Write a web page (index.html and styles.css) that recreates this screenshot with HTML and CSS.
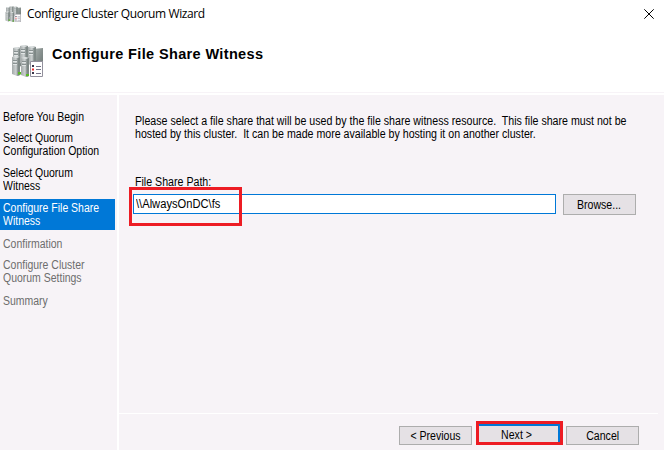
FILE: index.html
```
<!DOCTYPE html>
<html lang="en">
<head>
<meta charset="utf-8">
<title>Configure Cluster Quorum Wizard</title>
<link rel="stylesheet" href="styles.css">
</head>
<body>
<svg width="0" height="0" class="defs">
  <defs>
    <linearGradient id="metal" x1="0" x2="1"><stop offset="0" stop-color="#a3a9a9"/><stop offset=".45" stop-color="#c9cece"/><stop offset="1" stop-color="#858c8c"/></linearGradient>
    <linearGradient id="back" x1="0" x2="1" y2="1"><stop offset="0" stop-color="#b1b9b7"/><stop offset="1" stop-color="#5e6866"/></linearGradient>
    <g id="server">
      <path d="M0 1 5 0 8 1V19L5 20 0 18Z" fill="url(#metal)"/>
      <path d="M0 1 4 0 8 1 5 2Z" fill="#dce0e0"/>
      <path d="M5.5 2 8 1V19L5.5 20Z" fill="#7e8886"/>
      <path d="M1 4.5H5M1 7.5H5" stroke="#7b8585" stroke-width=".8"/>
      <path d="M1 5.5H5M1 8.5H5" stroke="#e8ecec" stroke-width=".8"/>
    </g>
    <symbol id="cluster" viewBox="0 0 32 32">
      <path d="M22 4 32 3V31H20Z" fill="url(#back)"/>
      <use href="#server" x="2" y="2"/><use href="#server" x="9" y="0"/><use href="#server" x="17" y="1"/>
      <use href="#server" x="1" y="11"/><use href="#server" x="10" y="12"/>
      <path d="M7 27h3v2.5H7zM15 29h3v2h-3z" fill="#59ba25"/>
      <path d="M19.5 16.5h12v15h-12z" fill="#fff" stroke="#92909c"/>
      <path d="M21 20h2v2h-2zM21 27h2v2h-2z" fill="#393549"/>
      <path d="M21 23.5h2v2h-2z" fill="#ee2b2b"/>
      <path d="M25 21.5h5M25 24.5h5M25 28.5h5" stroke="#77758a"/>
    </symbol>
  </defs>
</svg>
<div class="window">
  <header class="top">
    <div class="titlebar">
      <svg class="icon-small"><use href="#cluster"/></svg>
      <span class="title">Configure Cluster Quorum Wizard</span>
      <svg class="close" viewBox="0 0 10 10"><path d="M.3.3 9.7 9.7M9.7.3.3 9.7"/></svg>
    </div>
    <div class="banner">
      <svg class="icon-large"><use href="#cluster"/></svg>
      <h1>Configure File Share Witness</h1>
    </div>
  </header>
  <div class="body">
    <nav class="steps">
      <div class="step"><span>Before You Begin</span></div>
      <div class="step"><span>Select Quorum<br>Configuration Option</span></div>
      <div class="step"><span>Select Quorum<br>Witness</span></div>
      <div class="step current"><span>Configure File Share<br>Witness</span></div>
      <div class="step todo"><span>Confirmation</span></div>
      <div class="step todo"><span>Configure Cluster<br>Quorum Settings</span></div>
      <div class="step todo"><span>Summary</span></div>
    </nav>
    <main class="main">
      <section class="content">
        <p class="intro"><span>Please select a file share that will be used by the file share witness resource.&nbsp; This file share must not be<br>hosted by this cluster.&nbsp; It can be made more available by hosting it on another cluster.</span></p>
        <div class="label"><span>File Share Path:</span></div>
        <div class="field">
          <div class="input"><span>\\AlwaysOnDC\fs</span></div>
          <div class="button browse"><span>Browse...</span></div>
          <div class="mark mark-path"></div>
        </div>
      </section>
      <footer class="footer">
        <div class="button"><span>&lt; Previous</span></div>
        <div class="button next"><span>Next &gt;</span></div>
        <div class="button cancel"><span>Cancel</span></div>
      </footer>
    </main>
  </div>
</div>
</body>
</html>
```
FILE: styles.css
```
* { box-sizing: border-box; }
body { margin: 0; background: #fff; overflow: hidden; }
.defs { position: absolute; }
.window {
  width: 664px; height: 450px;
  display: flex; flex-direction: column;
  font: 12px/13px "Liberation Sans", Arial, sans-serif;
  color: #000; background: #fff; white-space: nowrap;
}
.body span { display: inline-block; vertical-align: top; transform: scaleX(.886); transform-origin: left; }
.top { height: 93px; border-bottom: 1px solid #f7f3f7; }
.titlebar { display: flex; height: 27px; padding: 0 10px 0 5px; align-items: center; }
.icon-small { width: 16px; height: 16px; }
.title { margin-left: 6px; font: 12px/16px "Open Sans", "Noto Sans", sans-serif; letter-spacing: -.38px; }
.close { width: 10px; height: 10px; margin-left: auto; stroke: #000; stroke-width: 1; fill: none; }
.banner { display: flex; padding: 18px 0 0 11px; }
.icon-large { width: 32px; height: 32px; }
h1 { margin: 1px 0 0 9px; font: bold 14.5px/17px "Liberation Sans", Arial, sans-serif; letter-spacing: .36px; }
.body { flex: 1; display: grid; grid-template-columns: 117px 1fr; column-gap: 2px; margin-top: 2px; }
.steps { display: grid; grid-template-rows: 21px 35px 32px 39px 21px 36px 21px; align-content: start; padding-top: 16px; background: #f7f3f7; }
.step { padding-left: 3px; }
.body .step span { transform: scaleX(.873); }
.current { width: 115px; height: 31px; padding-top: 3px; background: #0078d7; color: #fff; }
.todo { color: #6d6d6d; }
.main { display: flex; flex-direction: column; background: #f7f3f7; min-width: 0; }
.content { height: 318px; padding: 20px 0 0 14px; }
.intro { margin: 0 0 35px 2px; }
.label { margin-left: 2px; height: 18px; }
.field { display: flex; position: relative; gap: 7px; }
.input { width: 423px; height: 20px; padding: 3px 2px; border: 1px solid #0078d7; background: #fff; }
.body .input span { transform: scaleX(.93); }
.button { width: 73px; height: 19px; border: 1px solid #adadad; background: #e5e1e5; text-align: center; line-height: 18px; }
.body .button span { transform: scaleX(.88); transform-origin: center; }
.browse { height: 21px; line-height: 20px; }
.mark { position: absolute; border: 3px solid #ed1c24; }
.mark-path { left: -4px; top: -7px; width: 113px; height: 39px; }
.footer { display: flex; margin-right: 6px; border-top: 1px solid #fff; padding: 12px 0 0 280px; }
.next { width: 87px; height: 24px; margin: -5px 3px 0 4px; border: 3px solid #ed1c24; box-shadow: inset -2px 2px #0078d7; line-height: 23px; padding-right: 6px; }
```
